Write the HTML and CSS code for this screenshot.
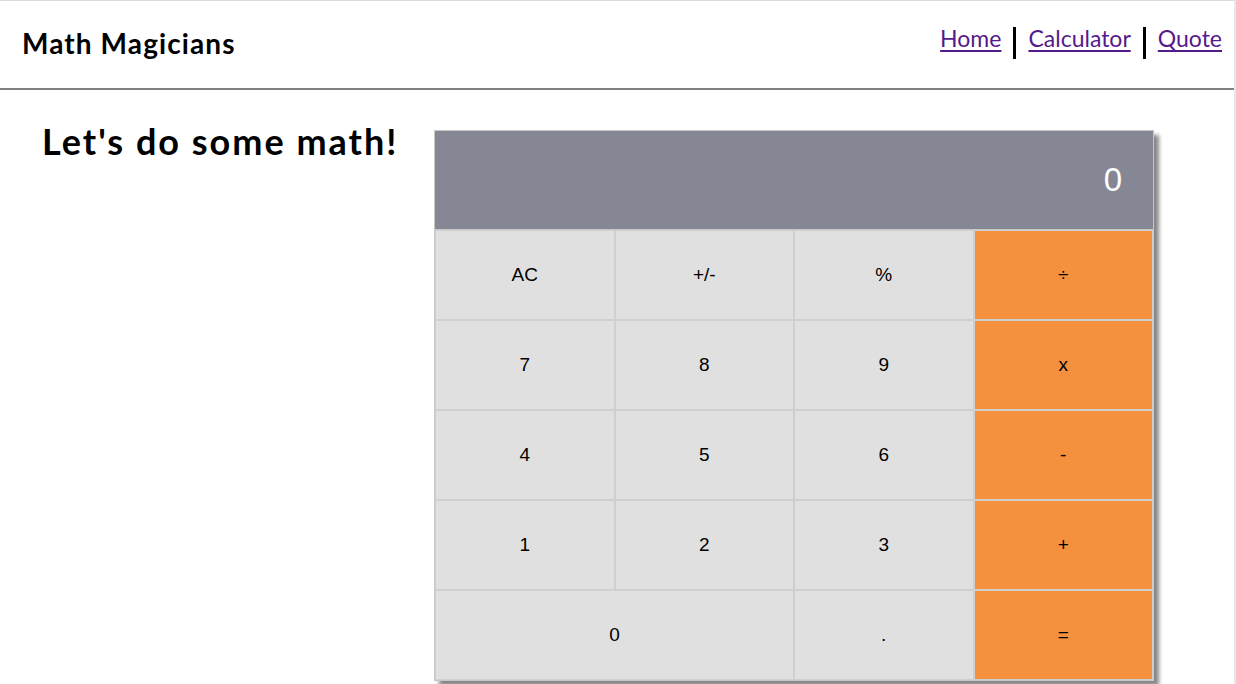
FILE: index.html
```html
<!DOCTYPE html>
<html lang="en">
<head>
<meta charset="utf-8">
<title>Math Magicians</title>
<link rel="stylesheet" href="styles.css">
</head>
<body>
<div class="page">
  <header class="header">
    <h1 class="logo">Math Magicians</h1>
    <nav>
      <ul class="nav">
        <li class="nav-item"><a href="#">Home</a></li>
        <li class="nav-item"><a href="#">Calculator</a></li>
        <li class="nav-item"><a href="#">Quote</a></li>
      </ul>
    </nav>
  </header>
  <main class="main">
    <h2 class="title">Let's do some math!</h2>
    <div class="calc">
      <div class="display">0</div>
      <div class="keys">
        <button class="key">AC</button>
        <button class="key">+/-</button>
        <button class="key">%</button>
        <button class="key op">÷</button>
        <button class="key">7</button>
        <button class="key">8</button>
        <button class="key">9</button>
        <button class="key op">x</button>
        <button class="key">4</button>
        <button class="key">5</button>
        <button class="key">6</button>
        <button class="key op">-</button>
        <button class="key">1</button>
        <button class="key">2</button>
        <button class="key">3</button>
        <button class="key op">+</button>
        <button class="key wide">0</button>
        <button class="key">.</button>
        <button class="key op">=</button>
      </div>
    </div>
  </main>
</div>
</body>
</html>
```
FILE: styles.css
```css
* { box-sizing: border-box; }
html, body { margin: 0; padding: 0; background: #fff; }
body { font-family: "Lato", "Noto Sans", sans-serif; color: #000; overflow: hidden; }
.page {
  width: 1236px;
  height: 684px;
  border-top: 1px solid #dcdcdc;
  border-right: 2px solid #e8e8e8;
}
.header {
  display: flex;
  justify-content: space-between;
  align-items: flex-start;
  height: 89px;
  padding: 0 12px 0 22px;
  border-bottom: 2px solid #808080;
}
.logo {
  margin: 25px 0 0;
  font-size: 28px;
  font-weight: 700;
  letter-spacing: 1.1px;
}
.nav {
  list-style: none;
  display: flex;
  margin: 26px 0 0;
  padding: 0;
}
.nav-item {
  font-size: 23px;
  line-height: 22px;
  height: 32px;
  padding: 0 12px 10px;
  border-left: 3px solid #000;
}
.nav-item:first-child { border-left: 0; }
.nav-item:last-child { padding-right: 0; }
.nav-item a { color: #551a8b; text-decoration: underline; text-underline-offset: 3px; }
.main {
  display: flex;
  align-items: flex-start;
  padding: 0 0 0 42px;
}
.title {
  margin: 31px 0 0;
  font-size: 36px;
  font-weight: 700;
  line-height: 40px;
  letter-spacing: 2px;
  width: 392px;
  white-space: nowrap;
}
.calc {
  margin-top: 40px;
  width: 720px;
  border: 1px solid #c8c8c8;
  box-shadow: 5px 5px 4px #888;
}
.display {
  height: 99px;
  background: #858794;
  color: #fff;
  font-family: "Liberation Sans", Arial, sans-serif;
  font-size: 33px;
  display: flex;
  align-items: center;
  justify-content: flex-end;
  padding-right: 31px;
  border-bottom: 1px solid #c8c8c8;
}
.keys {
  display: grid;
  grid-template-columns: repeat(4, 1fr);
  grid-auto-rows: 90px;
}
.key {
  font-family: "Liberation Sans", Arial, sans-serif;
  font-size: 19px;
  color: #000;
  background: #e0e0e0;
  border: 1px solid #cfcfcf;
  margin: 0;
  padding: 0;
}
.key.op { background: #f5913e; }
.key.wide { grid-column: span 2; }
```
